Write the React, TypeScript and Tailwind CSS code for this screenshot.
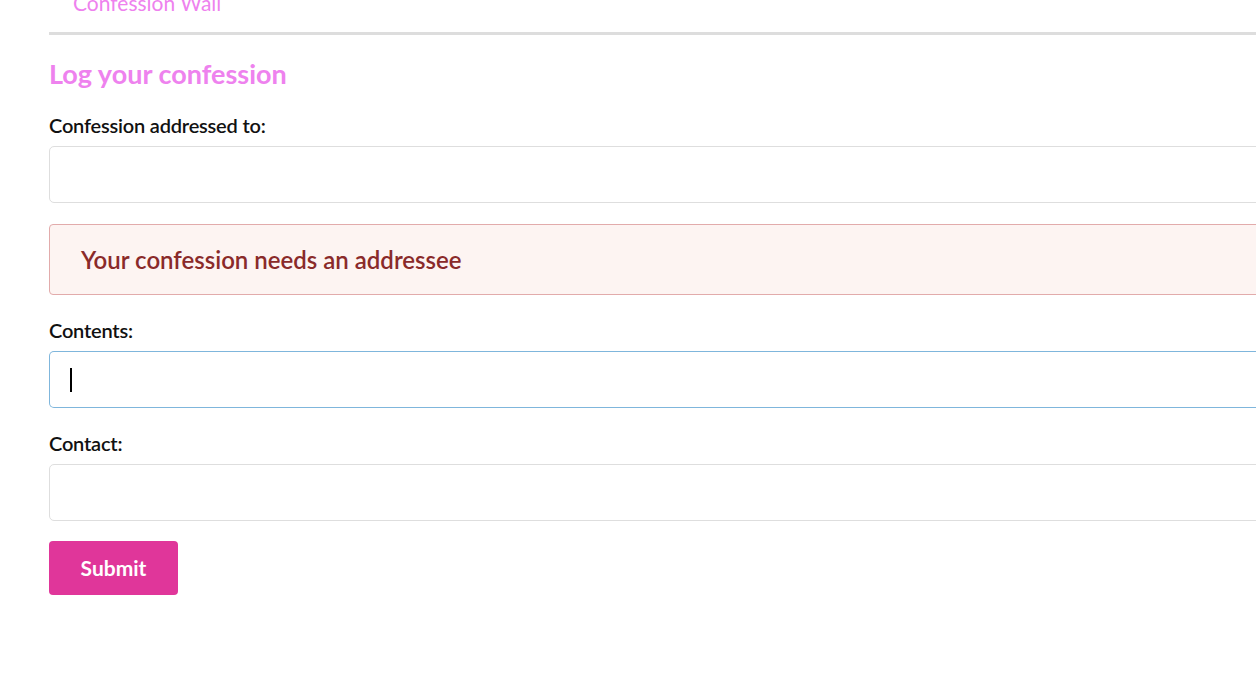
import React from 'react';

function Field({ label, focused }: { label: string; focused?: boolean }) {
  return (
    <div className="flex flex-col">
      <label className="text-[20px] font-semibold leading-[22px] tracking-[-0.2px] text-[#111]">{label}</label>
      {focused ? (
        <div className="mt-[10px] h-[57px] rounded-[5px] bg-[#7fb6dc] p-px">
          <div className="flex h-full items-center rounded-[4px] bg-white pl-[20px]">
            <span className="h-[24px] w-[2px] bg-black" />
          </div>
        </div>
      ) : (
        <div className="mt-[10px] h-[57px] rounded-[5px] border border-[#dedede] bg-white" />
      )}
    </div>
  );
}

export default function App() {
  return (
    <div className="h-[683px] w-[1256px] overflow-hidden bg-white" style={{ fontFamily: 'Lato, "Open Sans", sans-serif' }}>
      <div className="ml-[49px] w-[1400px] -mt-[9px]">
        {/* Nav */}
        <div className="pl-[24px] text-[21px] leading-[24px] text-[#ee82ee]">Confession Wall</div>
        <div className="mt-[17px] h-[3px] bg-[#dddddd]" />

        {/* Form */}
        <h2 className="mt-[24px] text-[27px] font-bold leading-[30px] text-[#ee82ee]">Log your confession</h2>

        <div className="mt-[25px]">
          <Field label="Confession addressed to:" />
        </div>

        <div className="mt-[21px] flex h-[71px] items-center rounded-[4px] border border-[#e2abab] bg-[#fdf4f2] pl-[31px]">
          <span className="text-[24px] font-semibold text-[#8a2a2a]">Your confession needs an addressee</span>
        </div>

        <div className="mt-[24px]">
          <Field label="Contents:" focused />
        </div>

        <div className="mt-[24px]">
          <Field label="Contact:" />
        </div>

        <button className="mt-[20px] h-[54px] w-[129px] rounded-[4px] bg-[#e0369a] text-[21px] font-bold text-white">
          Submit
        </button>
      </div>
    </div>
  );
}
